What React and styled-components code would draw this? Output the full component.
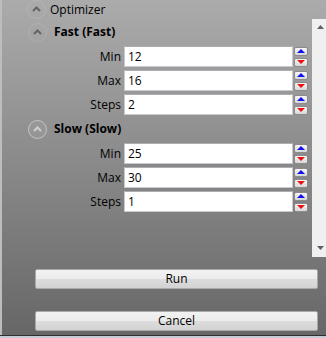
import React from 'react'
import styled, { createGlobalStyle } from 'styled-components'

const GlobalStyle = createGlobalStyle`
  html, body { margin: 0; padding: 0; }
  body {
    font-family: "Open Sans", "Noto Sans", sans-serif;
    font-size: 12px;
    color: #000;
  }
`;

const Window = styled.div`
  width: 326px;
  height: 338px;
  box-sizing: border-box;
  display: flex;
  flex-direction: column;
  overflow: hidden;
  background: linear-gradient(#ababab, #666666);
`;

const Main = styled.div`
  flex: 1;
  display: flex;
  flex-direction: column;
  border-left: 2px solid #bdbdbd;
`;

const TopHeader = styled.div`
  height: 19px;
  display: flex;
  align-items: center;
  padding-left: 25px;
  gap: 4px;
`;

const Body = styled.div`
  height: 238px;
  display: flex;
`;

const Content = styled.div`
  flex: 1;
  padding-top: 1px;
  display: flex;
  flex-direction: column;
  gap: 2px;
`;

const Group = styled.section`
  display: flex;
  flex-direction: column;
  gap: 3px;
`;

const GroupHeader = styled.div`
  height: 24px;
  display: flex;
  align-items: center;
  padding-left: 26px;
  gap: 7px;
  font-weight: 700;
  margin-bottom: -1px;
`;

const Title = styled.span`
  line-height: 16px;
`;

const Row = styled.div`
  display: flex;
  align-items: center;
  height: 21px;
`;

const Label = styled.label`
  width: 119px;
  text-align: right;
  line-height: 16px;
`;

const Field = styled.input`
  width: 169px;
  height: 21px;
  box-sizing: border-box;
  margin-left: 3px;
  padding: 0 3px;
  border: 1px solid #c9cacf;
  border-top-color: #abadb3;
  background: #fff;
  font: inherit;
  color: #000;
  outline: none;
`;

const Spinner = styled.div`
  margin-left: 1px;
  width: 14px;
  display: flex;
  flex-direction: column;
  gap: 2px;
`;

const SpinButton = styled.div`
  height: 9px;
  box-sizing: border-box;
  border: 1px solid #8c8c8c;
  border-radius: 2px;
  background: linear-gradient(#f6f6f6, #d8d8d8);
  display: flex;
  align-items: center;
  justify-content: center;
  &::after {
    content: "";
    width: 0;
    height: 0;
    border-left: 4px solid transparent;
    border-right: 4px solid transparent;
    ${p => p.$down
      ? 'border-top: 4px solid #f01010;'
      : 'border-bottom: 4px solid #1010f0;'}
  }
`;

const ScrollBar = styled.div`
  width: 14px;
  background: #f0f0f0;
  display: flex;
  flex-direction: column;
  justify-content: space-between;
  align-items: flex-start;
  padding: 6px 0 7px 5px;
  box-sizing: border-box;
`;

const ButtonArea = styled.div`
  display: flex;
  flex-direction: column;
  gap: 22px;
  padding: 12px 0 0 33px;
`;

const Button = styled.button`
  width: 283px;
  height: 20px;
  box-sizing: border-box;
  border: 1px solid #a9a9a9;
  border-radius: 2px;
  background: linear-gradient(#f2f2f2 0%, #ebebeb 50%, #dddddd 50%, #d3d3d3 100%);
  font: inherit;
  color: #000;
  padding: 0;
  line-height: 16px;
`;

const Footer = styled.div`
  height: 2px;
  border-top: 1px solid #2f2f2f;
  background: #c3ccd4;
`;

function Chevron({ active }) {
  return (
    <svg width="19" height="19" viewBox="0 0 19 19">
      <circle cx="9.5" cy="9.5" r="9" fill={active ? 'rgba(255,255,255,0.06)' : 'none'}
        stroke={active ? '#c4c4c4' : 'rgba(255,255,255,0.12)'} strokeWidth="1" />
      <polyline points="6,11 9.5,7.5 13,11" fill="none"
        stroke={active ? '#cfcfcf' : '#646464'} strokeWidth="2" />
    </svg>
  )
}

function Arrow({ down }) {
  return (
    <svg width="7" height="4" viewBox="0 0 7 4">
      <polygon points={down ? '0,0 7,0 3.5,4' : '0,4 7,4 3.5,0'} fill="#606060" />
    </svg>
  )
}

const groups = [
  { name: 'Fast (Fast)', active: false, rows: [['Min', '12'], ['Max', '16'], ['Steps', '2']] },
  { name: 'Slow (Slow)', active: true, rows: [['Min', '25'], ['Max', '30'], ['Steps', '1']] },
]

export default function App() {
  return (
    <>
      <GlobalStyle />
      <Window>
        <Main>
          <TopHeader>
            <Chevron />
            <Title>Optimizer</Title>
          </TopHeader>
          <Body>
            <Content>
              {groups.map(g => (
                <Group key={g.name}>
                  <GroupHeader>
                    <Chevron active={g.active} />
                    <Title>{g.name}</Title>
                  </GroupHeader>
                  {g.rows.map(([label, value]) => (
                    <Row key={label}>
                      <Label>{label}</Label>
                      <Field defaultValue={value} />
                      <Spinner>
                        <SpinButton />
                        <SpinButton $down />
                      </Spinner>
                    </Row>
                  ))}
                </Group>
              ))}
            </Content>
            <ScrollBar>
              <Arrow />
              <Arrow down />
            </ScrollBar>
          </Body>
          <ButtonArea>
            <Button>Run</Button>
            <Button>Cancel</Button>
          </ButtonArea>
        </Main>
        <Footer />
      </Window>
    </>
  )
}
